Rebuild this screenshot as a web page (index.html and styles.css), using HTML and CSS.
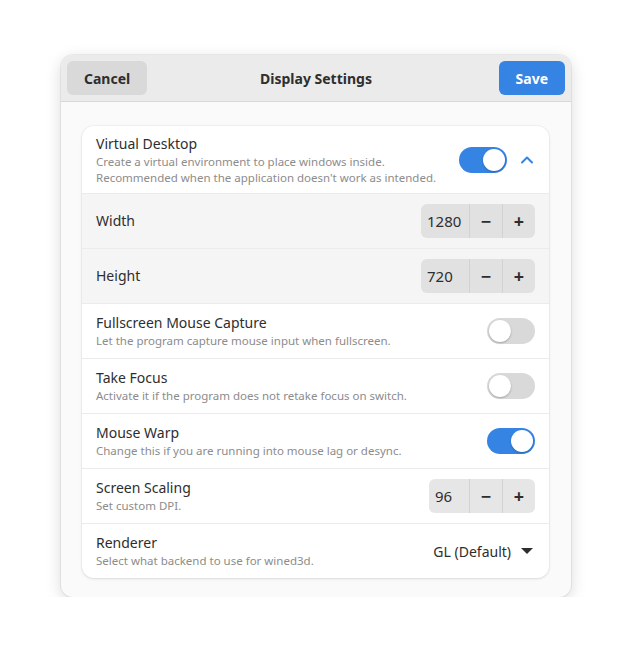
FILE: index.html
```html
<!DOCTYPE html>
<html lang="en">
  <head>
    <meta charset="UTF-8" />
    <meta name="viewport" content="width=device-width, initial-scale=1.0" />
    <title>Display Settings</title>
    <link rel="stylesheet" href="styles.css">
  </head>
  <body>
    <div class="window">
      <header class="headerbar">
        <button class="btn">Cancel</button>
        <h1 class="title">Display Settings</h1>
        <button class="btn btn-accent">Save</button>
      </header>

      <div class="content">
        <div class="card">
          <!-- expander -->
          <div class="row row-expander">
            <div class="labels">
              <div class="row-title">Virtual Desktop</div>
              <div class="row-sub">Create a virtual environment to place windows inside.<br>Recommended when the application doesn't work as intended.</div>
            </div>
            <div class="switch on"><span class="knob"></span></div>
            <svg class="chevron" width="16" height="16" viewBox="0 0 16 16">
              <path d="M3 10.5 L8 5.5 L13 10.5" fill="none" stroke="#3584e4" stroke-width="2" stroke-linecap="round" stroke-linejoin="round" />
            </svg>
          </div>
          <div class="row row-nested">
            <div class="labels">
              <div class="row-title">Width</div>
            </div>
            <div class="spin">
              <span class="spin-value">1280</span>
              <span class="spin-btn">&minus;</span>
              <span class="spin-btn">+</span>
            </div>
          </div>
          <div class="row row-nested">
            <div class="labels">
              <div class="row-title">Height</div>
            </div>
            <div class="spin">
              <span class="spin-value">720</span>
              <span class="spin-btn">&minus;</span>
              <span class="spin-btn">+</span>
            </div>
          </div>

          <div class="row">
            <div class="labels">
              <div class="row-title">Fullscreen Mouse Capture</div>
              <div class="row-sub">Let the program capture mouse input when fullscreen.</div>
            </div>
            <div class="switch"><span class="knob"></span></div>
          </div>
          <div class="row">
            <div class="labels">
              <div class="row-title">Take Focus</div>
              <div class="row-sub">Activate it if the program does not retake focus on switch.</div>
            </div>
            <div class="switch"><span class="knob"></span></div>
          </div>
          <div class="row">
            <div class="labels">
              <div class="row-title">Mouse Warp</div>
              <div class="row-sub">Change this if you are running into mouse lag or desync.</div>
            </div>
            <div class="switch on"><span class="knob"></span></div>
          </div>
          <div class="row">
            <div class="labels">
              <div class="row-title">Screen Scaling</div>
              <div class="row-sub">Set custom DPI.</div>
            </div>
            <div class="spin">
              <span class="spin-value short">96</span>
              <span class="spin-btn">&minus;</span>
              <span class="spin-btn">+</span>
            </div>
          </div>
          <div class="row">
            <div class="labels">
              <div class="row-title">Renderer</div>
              <div class="row-sub">Select what backend to use for wined3d.</div>
            </div>
            <div class="dropdown">
              <span>GL (Default)</span>
              <svg width="16" height="16" viewBox="0 0 16 16">
                <path d="M2 5 L14 5 L8 11 Z" fill="#2e2e2e" />
              </svg>
            </div>
          </div>
        </div>
      </div>
    </div>
  </body>
</html>
```

FILE: styles.css
```css
body {
  font-family: "Noto Sans", "Open Sans", sans-serif;
  background-color: #ffffff;
  color: #2e2e2e;
  margin: 0;
  padding: 55px 0 0 0;
  display: flex;
  justify-content: center;
}
.window {
  width: 510px;
  background-color: #fafafa;
  border-radius: 12px;
  overflow: hidden;
  box-shadow: 0 0 0 1px rgba(0, 0, 0, 0.06), 0 4px 16px rgba(0, 0, 0, 0.15);
}
.headerbar {
  display: grid;
  grid-template-columns: 1fr auto 1fr;
  align-items: center;
  padding: 6px;
  background-color: #ebebeb;
  border-bottom: 1px solid #d8d8d8;
}
.headerbar .btn:first-child {
  justify-self: start;
}
.headerbar .btn:last-child {
  justify-self: end;
}
.title {
  margin: 0;
  font-size: 14px;
  font-weight: 700;
  color: #2e2e2e;
}
.btn {
  height: 34px;
  padding: 0 17px;
  border: none;
  border-radius: 6px;
  background-color: #d9d9d9;
  color: #2e2e2e;
  font-family: inherit;
  font-size: 14px;
  font-weight: 700;
}
.btn-accent {
  background-color: #3584e4;
  color: #ffffff;
}
.content {
  padding: 24px 22px 19px 21px;
}
.card {
  background-color: #ffffff;
  border-radius: 12px;
  overflow: hidden;
  box-shadow: 0 0 0 1px rgba(0, 0, 0, 0.03), 0 1px 3px rgba(0, 0, 0, 0.1);
}
.row {
  display: flex;
  align-items: center;
  height: 54px;
  padding: 0 14px;
  border-bottom: 1px solid #ebebeb;
}
.row:last-child {
  border-bottom: none;
}
.row-expander {
  height: 67px;
}
.row-nested {
  background-color: #f5f5f5;
}
.labels {
  flex: 1;
}
.row-title {
  font-size: 14px;
  line-height: 20px;
  color: #2e2e2e;
}
.row-sub {
  font-size: 11.5px;
  line-height: 16px;
  color: #8c8c8c;
}
.switch {
  width: 48px;
  height: 26px;
  box-sizing: border-box;
  padding: 2px;
  border-radius: 13px;
  background-color: #d9d9d9;
  display: flex;
}
.switch.on {
  background-color: #3584e4;
  justify-content: flex-end;
}
.knob {
  width: 22px;
  height: 22px;
  border-radius: 50%;
  background-color: #ffffff;
  box-shadow: 0 1px 2px rgba(0, 0, 0, 0.25);
}
.chevron {
  margin-left: 12px;
}
.spin {
  display: flex;
  height: 34px;
  border-radius: 6px;
  background-color: #e6e6e6;
  overflow: hidden;
}
.row-nested .spin {
  background-color: #e1e1e1;
}
.spin-value {
  width: 48px;
  box-sizing: border-box;
  padding-left: 6px;
  font-size: 15px;
  line-height: 34px;
}
.spin-value.short {
  width: 40px;
}
.spin-btn {
  width: 33px;
  box-sizing: border-box;
  border-left: 1px solid #d2d2d2;
  text-align: center;
  font-size: 18px;
  font-weight: 700;
  line-height: 34px;
}
.dropdown {
  display: flex;
  align-items: center;
  gap: 8px;
  font-size: 14px;
}
```
